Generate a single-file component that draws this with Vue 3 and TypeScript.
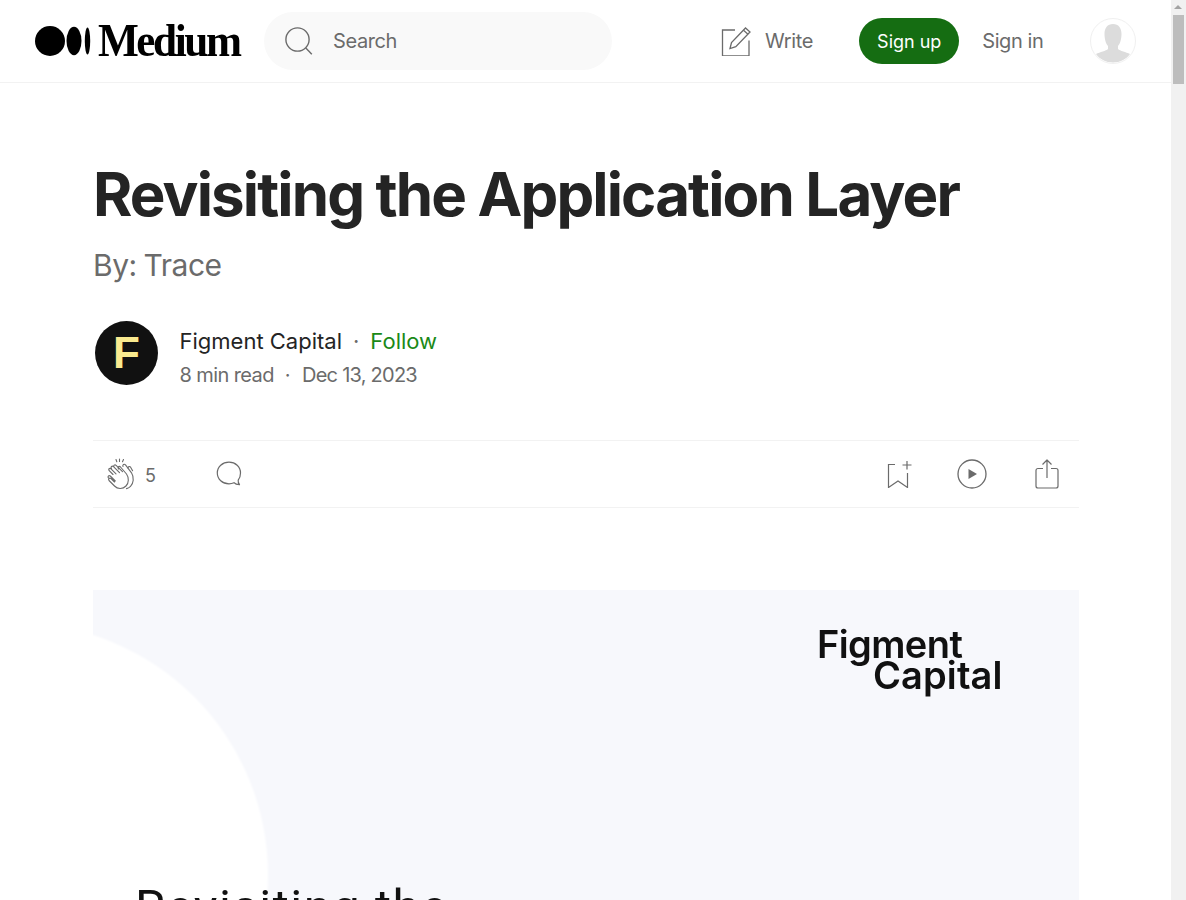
<template>
  <div class="page">
    <div class="main">
      <header class="topbar">
        <div class="logo">
          <svg class="logo-mark" width="56" height="30" viewBox="0 0 56 30">
            <ellipse cx="15" cy="15" rx="15" ry="15" fill="#000" />
            <ellipse cx="39" cy="15" rx="7.5" ry="14.2" fill="#000" />
            <ellipse cx="52.5" cy="15" rx="2.7" ry="13.4" fill="#000" />
          </svg>
          <span class="logo-text">Medium</span>
        </div>
        <div class="search">
          <svg width="28" height="28" viewBox="0 0 28 28" fill="none" stroke="#6b6b6b" stroke-width="1.4">
            <circle cx="12.5" cy="12.5" r="11.6" />
            <path d="M20.8 21l6 6.2" />
          </svg>
          <span>Search</span>
        </div>
        <div class="write">
          <svg width="30" height="30" viewBox="0 0 30 30" fill="none" stroke="#6b6b6b" stroke-width="1.3">
            <path d="M14 4H1.500v26H28V14.500" />
            <path d="M9 22.500l1.500-6L24.500 2l4.500 4-14.200 14.600z" />
            <path d="M22.500 4.200l4.500 4" />
          </svg>
          <span>Write</span>
        </div>
        <button class="signup">Sign up</button>
        <span class="signin">Sign in</span>
        <div class="avatar">
          <svg width="44" height="44" viewBox="0 0 44 44">
            <path fill="#dcdcdc" d="M22 5c5.500 0 8.500 4 8.500 10 0 5-1.500 10-3.500 12v3c2 2 8 3 12 5-4 5.500-10 8.500-17 8.500S9 40.500 5 35c4-2 10-3 12-5v-3c-2-2-3.500-7-3.500-12C13.500 9 16.500 5 22 5z" />
          </svg>
        </div>
      </header>

      <article class="article">
        <h1>Revisiting the Application Layer</h1>
        <h2>By: Trace</h2>

        <div class="author">
          <div class="author-pic">F</div>
          <div class="author-info">
            <div class="line-one">
              <span class="name">Figment Capital</span>
              <span class="dot">·</span>
              <span class="follow">Follow</span>
            </div>
            <div class="line-two">
              <span>8 min read</span>
              <span class="dot">·</span>
              <span class="date">Dec 13, 2023</span>
            </div>
          </div>
        </div>

        <div class="actions">
          <div class="actions-left">
            <svg class="clap" width="30" height="32" viewBox="0 0 30 32" fill="none" stroke="#6b6b6b" stroke-width="1.1" stroke-linecap="round" stroke-linejoin="round">
              <path d="M10 1.500l.8 2.200M13.500 1v2.400M17.500 1.500l-1 2.200" />
              <g transform="translate(0 2)">
                <path d="M7 14.500L3.200 10.600c-1.300-1.300.5-3 1.800-1.800l5 5M5.500 8.500c-1.300-1.500.6-3.200 2-1.800l6 6M8 7c-1-1.500.8-2.800 2.100-1.700l6.400 6.400M12.500 9c-1.500-2 .6-3.400 2-2l6 7c2.500 3.500 2.500 9-.5 12-3.500 3.500-8.500 3-11.500 0L3 20.500c-1.200-1.400.6-3.200 2-2l3.500 3.500M2.500 18c-1.300-1.300.3-3.200 1.800-2l5 5" />
                <path d="M17 6.500c-.8-1.800 1.200-3 2.500-1.700l6 8c2.900 4.800 2 10.500-1 13.500-1.200 1.200-2.600 2-4 2.300" />
                <path d="M22 8c0-1.500 1.700-1.900 2.600-.8l2 3.500" />
              </g>
            </svg>
            <span class="clap-count">5</span>
            <svg class="comment" width="26" height="26" viewBox="0 0 26 26" fill="none" stroke="#6b6b6b" stroke-width="1.2" stroke-linejoin="round">
              <path d="M24.500 12c0-6.200-5-10.800-11.500-10.800S1.300 5.800 1.300 12 6.500 22.800 13 22.800c2 0 3.500-.4 5-1.100.8 1 3 2 5.500 2-1-1.200-1.500-2.600-1.300-4.500 1.400-1.800 2.300-4.500 2.300-7.200z" />
            </svg>
          </div>
          <div class="actions-right">
            <svg width="26" height="28" viewBox="0 0 26 28" fill="none" stroke="#6b6b6b" stroke-width="1.2">
              <path d="M8 4.500H1.500v23l9.500-6.500 9.500 6.500V13" />
              <path d="M20 1v8.500M15.500 5h9" />
            </svg>
            <svg width="30" height="30" viewBox="0 0 30 30">
              <circle cx="15" cy="15" r="14" fill="none" stroke="#6b6b6b" stroke-width="1.3" />
              <path d="M11.500 10v10l8.500-5z" fill="#6b6b6b" />
            </svg>
            <svg class="share" width="24" height="30" viewBox="0 0 24 30" fill="none" stroke="#6b6b6b" stroke-width="1.200" stroke-linejoin="round">
              <path d="M8 9.500H3c-1.200 0-2 .8-2 2V27c0 1.200.8 2 2 2h18c1.200 0 2-.8 2-2V11.500c0-1.200-.8-2-2-2h-5" />
              <path d="M12 19V1M7.500 5.500L12 1l4.500 4.500" />
            </svg>
          </div>
        </div>

        <div class="hero">
          <div class="hero-circle"></div>
          <div class="hero-logo">
            <span>Figment</span>
            <span class="hero-logo-two">Capital</span>
          </div>
          <div class="hero-title">Revisiting the</div>
        </div>
      </article>
    </div>

    <div class="scrollbar">
      <div class="arrow"></div>
      <div class="thumb"></div>
    </div>
  </div>
</template>

<script setup lang="ts">
</script>

<style>
html,
body {
  margin: 0;
  overflow: hidden;
  background: #fff;
}
</style>

<style scoped>
.page {
  display: flex;
  height: 900px;
  overflow: hidden;
  font-family: Inter, "Liberation Sans", sans-serif;
  color: #242424;
}

.main {
  width: 1171px;
  flex: none;
}

.topbar {
  display: flex;
  align-items: center;
  height: 82px;
  padding-left: 35px;
  border-bottom: 1px solid #f2f2f2;
  box-sizing: content-box;
}

.logo {
  display: flex;
  align-items: center;
  width: 229px;
  flex: none;
}

.logo-text {
  display: inline-block;
  margin-left: 7px;
  font-family: "Liberation Serif", serif;
  font-weight: 700;
  font-size: 46px;
  letter-spacing: -2.6px;
  color: #000;
  line-height: 1;
  transform: scaleX(0.94);
  transform-origin: left center;
}

.search {
  display: flex;
  align-items: center;
  gap: 20px;
  width: 348px;
  height: 58px;
  padding-left: 21px;
  box-sizing: border-box;
  border-radius: 29px;
  background: #f9f9f9;
  font-size: 20px;
  letter-spacing: -0.4px;
  color: #6b6b6b;
}

.write {
  display: flex;
  align-items: center;
  gap: 14px;
  margin-left: 109px;
  font-size: 20px;
  letter-spacing: -0.3px;
  color: #6b6b6b;
}

.signup {
  width: 100px;
  height: 46px;
  margin-left: 46px;
  border: 0;
  border-radius: 23px;
  background: #156d12;
  color: #fff;
  font: 400 18px Inter, sans-serif;
  padding: 0;
}

.signin {
  margin-left: 23px;
  font-size: 20px;
  letter-spacing: -0.4px;
  color: #6b6b6b;
}

.avatar {
  width: 44px;
  height: 44px;
  margin-left: 47px;
  border: 1px solid #f0f0f0;
  border-radius: 50%;
  overflow: hidden;
}

.article {
  padding: 0 92px 0 93px;
}

h1 {
  margin: 75px 0 0;
  font-size: 60px;
  line-height: 72px;
  font-weight: 700;
  letter-spacing: -1.870px;
  color: #242424;
}

h2 {
  margin: 16px 0 0;
  font-size: 30px;
  line-height: 38px;
  font-weight: 400;
  letter-spacing: -0.5px;
  word-spacing: -1px;
  color: #6b6b6b;
}

.author {
  display: flex;
  align-items: center;
  margin-top: 33px;
  padding-left: 2px;
}

.author-pic {
  display: flex;
  align-items: center;
  justify-content: center;
  flex: none;
  width: 63px;
  height: 64px;
  border-radius: 50%;
  background: #111;
  color: #f9ea8f;
  font-family: "Liberation Sans", sans-serif;
  font-size: 44px;
  font-weight: 700;
}

.author-info {
  margin: 9px 0 0 21.500px;
}

.line-one {
  display: flex;
  align-items: center;
  font-size: 22px;
  line-height: 30px;
}

.line-two {
  display: flex;
  align-items: center;
  margin-top: 5px;
  font-size: 20px;
  line-height: 28px;
  letter-spacing: -0.6px;
  color: #6b6b6b;
}

.date {
  margin-left: 1px;
  letter-spacing: -0.75px;
}

.dot {
  margin: 0 11px;
  color: #6b6b6b;
}

.follow {
  color: #1a8917;
}

.actions {
  display: flex;
  justify-content: space-between;
  align-items: center;
  height: 66px;
  margin-top: 51px;
  border-top: 1px solid #f2f2f2;
  border-bottom: 1px solid #f2f2f2;
}

.actions-left {
  display: flex;
  align-items: center;
  padding-left: 13px;
}

.clap-count {
  margin: 2px 0 0 9px;
  font-size: 18px;
  color: #6b6b6b;
}

.comment {
  margin-left: 60px;
}

.actions-right {
  display: flex;
  align-items: center;
  gap: 44px;
  padding-right: 20px;
}

.share {
  margin-left: 4px;
}

.hero {
  position: relative;
  height: 400px;
  margin-top: 82px;
  background: #f7f8fc;
  overflow: hidden;
}

.hero-circle {
  position: absolute;
  left: -329px;
  top: 33px;
  width: 504px;
  height: 504px;
  border-radius: 50%;
  background: #fff;
  filter: blur(1px);
}

.hero-logo {
  position: absolute;
  left: 724px;
  top: 39px;
  display: flex;
  flex-direction: column;
  font-size: 38px;
  line-height: 31px;
  font-weight: 600;
  letter-spacing: -0.6px;
  color: #111;
  filter: blur(0.5px);
}

.hero-logo-two {
  margin-left: 56px;
  letter-spacing: 0.1px;
}

.hero-title {
  position: absolute;
  left: 42px;
  top: 290px;
  font-family: Roboto, sans-serif;
  font-size: 49px;
  line-height: 56px;
  letter-spacing: 1.5px;
  color: #111;
  white-space: nowrap;
  filter: blur(0.4px);
}

.scrollbar {
  position: relative;
  width: 15px;
  flex: none;
  background: #f1f1f1;
}

.arrow {
  width: 0;
  height: 0;
  margin: 5px 0 0 3px;
  border-left: 4px solid transparent;
  border-right: 4px solid transparent;
  border-bottom: 4px solid #a3a3a3;
}

.thumb {
  width: 11px;
  height: 69px;
  margin: 6px 0 0 2px;
  background: #bdbdbd;
}
</style>
